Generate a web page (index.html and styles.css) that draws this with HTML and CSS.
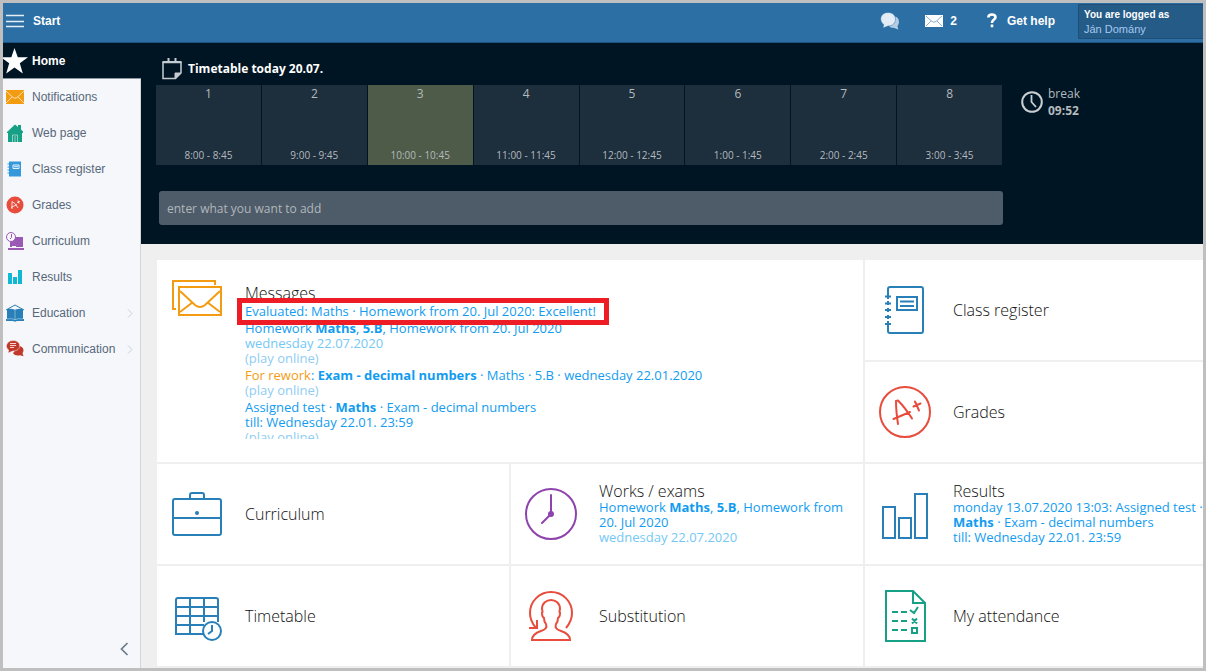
FILE: index.html
```
<!DOCTYPE html>
<html lang="en">
<head>
<meta charset="utf-8">
<title>Start</title>
<link rel="stylesheet" href="styles.css">
</head>
<body>
<div class="app">
  <header class="topbar">
    <button class="menu-button" type="button">
      <svg width="18" height="14" viewBox="0 0 18 14" stroke="#e6eef5" stroke-width="1.500" aria-hidden="true"><path d="M0 1.500h18M0 7.500h18M0 12.500h18"/></svg>
      <span>Start</span>
    </button>
    <nav class="top-links" aria-label="Account">
      <a class="top-link chat" href="#" aria-label="Chat">
        <svg width="20" height="18" viewBox="0 0 20 18" aria-hidden="true"><path d="M12 4q7 0 7 6 0 2.500-1.500 4l.8 3.500-4-1.500q-4 0-6-2.500z" fill="#b5cde3"/><path d="M8 .5c10 0 10 13.500 0 13.500L3 16l.7-3.500C-2 8 1 .5 8 .5z" fill="#e4edf6" stroke="#2b6fa4" stroke-width=".5"/></svg>
      </a>
      <a class="top-link mail" href="#">
        <svg width="18" height="12" viewBox="0 0 18 12" fill="none" stroke="#8bb0d0" aria-hidden="true"><path d="M0 0h18v12H0z" fill="#fff" stroke="none"/><path d="M1 1l6 5.500q2 1.500 4 0L17 1M1 11l5-5M17 11l-5-5"/></svg>
        <span>2</span>
      </a>
      <a class="top-link help" href="#">
        <svg width="10" height="15" viewBox="0 0 10 15" fill="none" stroke="#fff" stroke-width="2.600" aria-hidden="true"><path d="M1.300 4.500Q1.500 1.500 5 1.500t3.500 2.800Q8.500 6 6.500 7 5 8 5 10M5 11.500v2.700"/></svg>
        <span>Get help</span>
      </a>
      <a class="user" href="#"><b>You are logged as</b><span>Ján Domány</span></a>
    </nav>
  </header>

  <aside class="sidebar">
    <nav class="side-nav" aria-label="Main">
      <a class="side-item current" href="#">
        <svg width="25" height="26" viewBox="0 0 25 26" aria-hidden="true"><path d="M11.500 0l3.300 9.300H25l-8.200 6 3 10.200-8.300-6-8.300 6 3-10.200-8.200-6H8.300z" fill="#fff"/></svg>
        <span>Home</span>
      </a>
      <a class="side-item" href="#">
        <svg width="25" height="18" viewBox="0 0 25 18" fill="none" stroke="#fbe0b0" aria-hidden="true"><path d="M3 2h18v14H3z" fill="#f39c12" stroke="none"/><path d="M3 3l7 6.500q2 1.500 4 0L21 3M3 15l6-6M21 15l-6-6"/></svg>
        <span>Notifications</span>
      </a>
      <a class="side-item" href="#">
        <svg width="25" height="18" viewBox="0 0 25 18" aria-hidden="true"><path d="M4 8l8-7.500 3 2.500V1h3v4.500l2 2V9h-1v9H5V9H4z" fill="#16a085"/><path d="M9.500 18v-7h5v7M12 12v6" fill="none" stroke="#8fd0c2"/></svg>
        <span>Web page</span>
      </a>
      <a class="side-item" href="#">
        <svg width="25" height="16" viewBox="0 0 25 16" aria-hidden="true"><path d="M6 .5h12v15H6z" fill="#3498db"/><path d="M4.500 3H7M4.500 6H7M4.500 9H7M4.500 12H7" stroke="#3498db"/><path d="M10 4h6v3.500h-6zM11 5.700h4" fill="none" stroke="#e8f4fc"/></svg>
        <span>Class register</span>
      </a>
      <a class="side-item" href="#">
        <svg width="25" height="18" viewBox="0 0 25 18" fill="none" stroke="#fff" aria-hidden="true"><circle cx="12" cy="9" r="8.500" fill="#e74c3c" stroke="none"/><path d="M9 13V5.500q3 1 6 6.500M8 11.500l6-3M14 6.500l3-1M15 4.500l1 3" stroke-width=".8"/></svg>
        <span>Grades</span>
      </a>
      <a class="side-item" href="#">
        <svg width="25" height="18" viewBox="0 0 25 18" aria-hidden="true"><path d="M7 5h13v10H7zM5 16h16v2H5z" fill="#9b59b6"/><circle cx="8" cy="5" r="4.500" fill="#f6f8fa" stroke="#9b59b6"/><path d="M8.500 2v3.500L7 7" fill="none" stroke="#9b59b6"/><path d="M9 14.500h4" stroke="#fff"/></svg>
        <span>Curriculum</span>
      </a>
      <a class="side-item" href="#">
        <svg width="25" height="14" viewBox="0 0 25 14" fill="#0fb9d6" aria-hidden="true"><path d="M5 3h4v11H5zM10 7h4v7h-4zM15 0h4v14h-4z"/></svg>
        <span>Results</span>
      </a>
      <a class="side-item" href="#">
        <svg width="25" height="18" viewBox="0 0 25 18" aria-hidden="true"><path d="M3 6l9-5 9 5" fill="none" stroke="#2980b9"/><path d="M4 5q4-.8 8 .8Q16 4.200 20 5v10h1v2h-7l-2 .8-2-.8H3v-2h1z" fill="#2980b9"/><path d="M4 15q4-1 8 .6 4-1.600 8-.6M12 6v10" fill="none" stroke="#9cc8e4" stroke-width=".7"/></svg>
        <span>Education</span>
        <svg class="more" width="6" height="9" viewBox="0 0 6 9" aria-hidden="true"><path d="M1 .5l4 4-4 4"/></svg>
      </a>
      <a class="side-item" href="#">
        <svg width="25" height="18" viewBox="0 0 25 18" aria-hidden="true"><path d="M15 6q5 0 5.500 4 0 2-1 3.200l1 3-3.500-1q-5 1-7-2z" fill="#c0392b"/><path d="M10 .5c9 0 9 10.500 0 10.500L5 13l.7-3C1 7 4 .5 10 .5z" fill="#c0392b" stroke="#f6f8fa" stroke-width=".5"/><path d="M7 3.500h6M7 5.500h6M7 7.500h4" stroke="#f6d5d0"/></svg>
        <span>Communication</span>
        <svg class="more" width="6" height="9" viewBox="0 0 6 9" aria-hidden="true"><path d="M1 .5l4 4-4 4"/></svg>
      </a>
    </nav>
    <button class="collapse" type="button" aria-label="Collapse menu">
      <svg width="9" height="14" viewBox="0 0 9 14" fill="none" stroke="#6b7c8c" stroke-width="1.700" aria-hidden="true"><path d="M7.500 1L1.500 7l6 6"/></svg>
    </button>
  </aside>

  <main class="main">
    <section class="today">
      <div class="today-main">
        <h1 class="today-title">
          <svg width="20" height="22" viewBox="0 0 20 22" fill="none" stroke="#c4cbd0" aria-hidden="true"><path d="M1 4.500v16h12.500l5.500-5.500V4.500z" stroke-width="1.500"/><path d="M.5 4h19M6.500 0v5M13.500 0v5" stroke-width="2"/><path d="M13 21v-6h6z" fill="#c4cbd0"/></svg>
          <span>Timetable today 20.07.</span>
        </h1>
        <ol class="lessons">
          <li class="lesson"><span>1</span><time>8:00 - 8:45</time></li>
          <li class="lesson"><span>2</span><time>9:00 - 9:45</time></li>
          <li class="lesson active"><span>3</span><time>10:00 - 10:45</time></li>
          <li class="lesson"><span>4</span><time>11:00 - 11:45</time></li>
          <li class="lesson"><span>5</span><time>12:00 - 12:45</time></li>
          <li class="lesson"><span>6</span><time>1:00 - 1:45</time></li>
          <li class="lesson"><span>7</span><time>2:00 - 2:45</time></li>
          <li class="lesson"><span>8</span><time>3:00 - 3:45</time></li>
        </ol>
        <input class="add-input" type="text" placeholder="enter what you want to add" aria-label="Add an item">
      </div>
      <div class="break">
        <svg width="22" height="22" viewBox="0 0 22 22" fill="none" stroke="#c9ced2" stroke-width="2" aria-hidden="true"><circle cx="11" cy="11" r="9.800"/><path d="M10.500 4v7l4.500 5" stroke-width="1.800"/></svg>
        <div><div>break</div><b>09:52</b></div>
      </div>
    </section>

    <section class="tiles">
      <article class="tile messages">
        <svg class="icon" width="52" height="52" viewBox="0 0 52 52" fill="none" stroke="#f39c12" stroke-width="2" aria-hidden="true"><path d="M5 30H2V2h42v4M8 8h42v28H8zM9 12l15 14q5 4 10 0l15-14M9 33l13-10M49 33L36 23"/></svg>
        <div class="tile-body">
          <h2>Messages</h2>
          <ul class="feed">
            <li><a class="highlight" href="#">Evaluated: Maths · Homework from 20. Jul 2020: Excellent!</a></li>
            <li><a href="#">Homework <b>Maths</b>, <b>5.B</b>, Homework from 20. Jul 2020<span class="soft">wednesday 22.07.2020</span><span class="faint">(play online)</span></a></li>
            <li><a href="#"><span class="warn">For rework</span>: <b>Exam - decimal numbers</b> · Maths · 5.B · wednesday 22.01.2020<span class="faint">(play online)</span></a></li>
            <li><a href="#">Assigned test · <b>Maths</b> · Exam - decimal numbers<br>till: Wednesday 22.01. 23:59<span class="faint">(play online)</span></a></li>
          </ul>
        </div>
      </article>
      <article class="tile">
        <svg class="icon" width="52" height="52" viewBox="0 0 52 52" fill="none" stroke="#2980b9" stroke-width="2" aria-hidden="true"><path d="M9 11V5q0-2 2-2h31q2 0 2 2v42q0 2-2 2H11q-2 0-2-2v-6M6 12.500h6M6 19.500h6M6 26h6M6 33h6M6 40h6M9 11v4M9 17v4M9 24v4M9 31v4M9 37v4"/><path d="M18 13h20v13H18zM21 17.500h14M21 22h14"/></svg>
        <div class="tile-body"><h2>Class register</h2></div>
      </article>
      <article class="tile">
        <svg class="icon" width="52" height="52" viewBox="0 0 52 52" fill="none" stroke="#e74c3c" stroke-width="2" stroke-linecap="round" stroke-linejoin="round" aria-hidden="true"><circle cx="26" cy="26" r="25"/><path d="M19 38q-2-13-2-23l2-.5q7 7 14 18M14.500 33L31 26M34.500 20.500l7-3M36 15.500l4 9"/></svg>
        <div class="tile-body"><h2>Grades</h2></div>
      </article>
      <article class="tile">
        <svg class="icon" width="52" height="52" viewBox="0 0 52 52" fill="none" stroke="#2980b9" stroke-width="2" aria-hidden="true"><rect x="2" y="11" width="48" height="36" rx="2"/><path d="M19 11V7q0-2 2-2h10q2 0 2 2v4M2 30h48"/><circle cx="26" cy="25" r="2" fill="#2980b9" stroke="none"/></svg>
        <div class="tile-body"><h2>Curriculum</h2></div>
      </article>
      <article class="tile">
        <svg class="icon" width="52" height="52" viewBox="0 0 52 52" fill="none" stroke="#8e44ad" stroke-width="2" stroke-linecap="round" aria-hidden="true"><circle cx="26" cy="26" r="25"/><path d="M26 7v19l-9 9"/><circle cx="26" cy="26" r="3" fill="#8e44ad" stroke="none"/></svg>
        <div class="tile-body">
          <h2>Works / exams</h2>
          <a class="note" href="#">Homework <b>Maths</b>, <b>5.B</b>, Homework from 20. Jul 2020<span class="soft">wednesday 22.07.2020</span></a>
        </div>
      </article>
      <article class="tile">
        <svg class="icon" width="52" height="52" viewBox="0 0 52 52" fill="none" stroke="#2980b9" stroke-width="2" aria-hidden="true"><path d="M4 19h12v31H4zM20 30h12v20H20zM36 6h12v44H36z"/></svg>
        <div class="tile-body">
          <h2>Results</h2>
          <a class="note" href="#">monday 13.07.2020 13:03: Assigned test · <b>Maths</b> · Exam - decimal numbers<br>till: Wednesday 22.01. 23:59</a>
        </div>
      </article>
      <article class="tile">
        <svg class="icon" width="52" height="52" viewBox="0 0 52 52" fill="none" stroke="#2980b9" stroke-width="2" aria-hidden="true"><path d="M32 44H5V10q0-2 2-2h38q2 0 2 2v22M19 8v36M33 8v24M5 17h42M5 26h42M5 35h28"/><circle cx="41" cy="41" r="9" fill="#fff"/><path d="M41 35v6l-4 3"/></svg>
        <div class="tile-body"><h2>Timetable</h2></div>
      </article>
      <article class="tile">
        <svg class="icon" width="52" height="52" viewBox="0 0 52 52" fill="none" stroke="#e74c3c" stroke-width="2" aria-hidden="true"><path d="M11 38Q5 31 5 23a21 21 0 0 1 42 0q0 8-6 15M4 38h8v-8"/><path d="M7 50q0-6 9-9 7-2 5-7-2-2-2-6-2-1-2-5 1 0 0-4c0-12 18-12 18 0q-1 4 0 4 0 4-2 5 0 4-2 6-2 5 5 7 9 3 9 9z"/></svg>
        <div class="tile-body"><h2>Substitution</h2></div>
      </article>
      <article class="tile">
        <svg class="icon" width="52" height="52" viewBox="0 0 52 52" fill="none" stroke="#16a085" stroke-width="2" aria-hidden="true"><path d="M7 1h27l12 12v38H7zM34 1v12h12"/><path d="M13 22h6M22 22h6M13 31h6M22 31h6M13 40h6M22 40h6M31 20l4 3 4-6M33 28.500l5 5M38 28.500l-5 5M33 38h5v5h-5z"/></svg>
        <div class="tile-body"><h2>My attendance</h2></div>
      </article>
    </section>
  </main>
</div>
</body>
</html>
```

FILE: styles.css
```
* {
  box-sizing: border-box;
}

body {
  margin: 0;
  font-family: "Open Sans", "Noto Sans", sans-serif;
  font-size: 13px;
  line-height: 15px;
}

a {
  color: inherit;
  text-decoration: none;
}

button {
  border: 0;
  padding: 0;
  background: none;
  color: inherit;
  font: inherit;
}

h1,
h2,
ul,
ol {
  margin: 0;
  padding: 0;
  list-style: none;
}

svg {
  flex: none;
}

.app {
  display: grid;
  grid-template: auto 1fr / 138px minmax(0, 1fr);
  min-height: 100vh;
  border: 3px solid #bfbfbf;
  background: #efefef;
}

/* Top bar */

.topbar {
  grid-column: 1 / -1;
  display: flex;
  justify-content: space-between;
  height: 40px;
  border-bottom: 1px solid #1d5380;
  background: #2b6fa4;
  color: #fff;
  font: bold 12px/14px "Liberation Sans", Arial, sans-serif;
}

.menu-button {
  display: flex;
  align-items: center;
  gap: 9px;
  padding: 0 0 4px 3px;
}

.top-links {
  display: flex;
}

.top-link {
  display: flex;
  align-items: center;
  padding-bottom: 4px;
}

.chat {
  margin-right: 25px;
}

.mail {
  gap: 7px;
  margin-right: 30px;
}

.help {
  gap: 10px;
  margin-right: 23px;
}

.user {
  display: flex;
  flex-direction: column;
  justify-content: center;
  width: 125px;
  margin: 1px 0 3px;
  padding-left: 5px;
  border: solid #1f4f78;
  border-width: 1px 0 1px 1px;
  border-radius: 2px 0 0 2px;
  background: #255b87;
  font-size: 11px;
}

.user b {
  font-size: 10px;
}

.user span {
  color: #a5c9f0;
  font-weight: normal;
}

/* Sidebar */

.sidebar {
  display: flex;
  flex-direction: column;
  justify-content: space-between;
  background: #f5f7fa;
  box-shadow: inset -1px 0 #d3d6d9;
  color: #58677a;
  font: 12px/14px "Liberation Sans", Arial, sans-serif;
}

.side-item {
  display: flex;
  align-items: center;
  gap: 4px;
  height: 36px;
  padding-right: 8px;
}

.side-item.current {
  border-bottom: 1px solid #8d979f;
  background: #001524;
  color: #fff;
  font-weight: bold;
}

.more {
  margin-left: auto;
  fill: none;
  stroke: #c9ced3;
}

.collapse {
  align-self: flex-end;
  padding: 8px 12px 12px;
}

.collapse svg {
  display: block;
}

/* Today */

.main {
  overflow: hidden;
}

.today {
  display: flex;
  height: 201px;
  padding-left: 15px;
  background: #001524;
  color: #b5babd;
}

.today-main {
  flex: 1;
}

.today-title {
  display: flex;
  align-items: center;
  gap: 6px;
  padding: 15px 0 5px 6px;
  color: #fff;
  font-size: 12px;
  line-height: 22px;
}

.lessons {
  display: grid;
  grid-template-columns: repeat(8, 1fr);
  gap: 1px;
}

.lesson {
  display: flex;
  flex-direction: column;
  align-items: center;
  justify-content: space-between;
  height: 80px;
  padding: 1px 0 2px;
  background: #1d2e3d;
  font-size: 12px;
}

.lesson time {
  font-size: 10px;
}

.lesson.active {
  background: #4e5b49;
}

.add-input {
  display: block;
  width: calc(100% - 2px);
  height: 34px;
  margin: 26px 0 0 3px;
  padding: 0 8px;
  border: 0;
  border-radius: 3px;
  background: #4e5b68;
  color: #fff;
  font: inherit;
  font-size: 12px;
}

.add-input::placeholder {
  color: #b0b7bd;
  opacity: 1;
}

.break {
  display: flex;
  align-items: center;
  align-self: flex-start;
  gap: 5px;
  width: 201px;
  padding: 42px 0 0 19px;
  font-size: 12px;
  line-height: 17px;
}

/* Tiles */

.tiles {
  display: grid;
  grid-template-columns: repeat(3, minmax(0, 1fr));
  grid-auto-rows: 100px;
  gap: 2px;
  margin: 16px -14px 2px 16px;
}

.tile {
  display: flex;
  align-items: center;
  overflow: hidden;
  padding-left: 14px;
  background: #fff;
}

.tile-body {
  flex: 1;
  min-width: 0;
  padding: 0 8px 0 22px;
}

.tile h2 {
  color: #111;
  font-size: 16px;
  font-weight: 300;
  line-height: 17px;
}

.tile a {
  color: #129cf0;
}

.messages {
  grid-area: 1 / 1 / span 2 / span 2;
  align-items: stretch;
}

.messages .icon {
  margin-top: 19px;
}

.messages .tile-body {
  overflow: hidden;
  margin: 22px 0 23px 12px;
  padding-left: 10px;
}

.messages h2 {
  line-height: 22px;
}

.note {
  display: block;
}

.feed {
  display: grid;
  gap: 2px;
}

.feed a {
  display: block;
}

.feed .highlight {
  position: relative;
  width: fit-content;
  margin: -1px -3px;
  padding: 1px 8px 1px 3px;
  outline: 5px solid #ee1c25;
  background: #fff;
}

.soft,
.faint {
  display: block;
}

.soft {
  color: #74c8f5;
}

.faint {
  color: #90cdf3;
}

.warn {
  color: #f39c12;
}
```
